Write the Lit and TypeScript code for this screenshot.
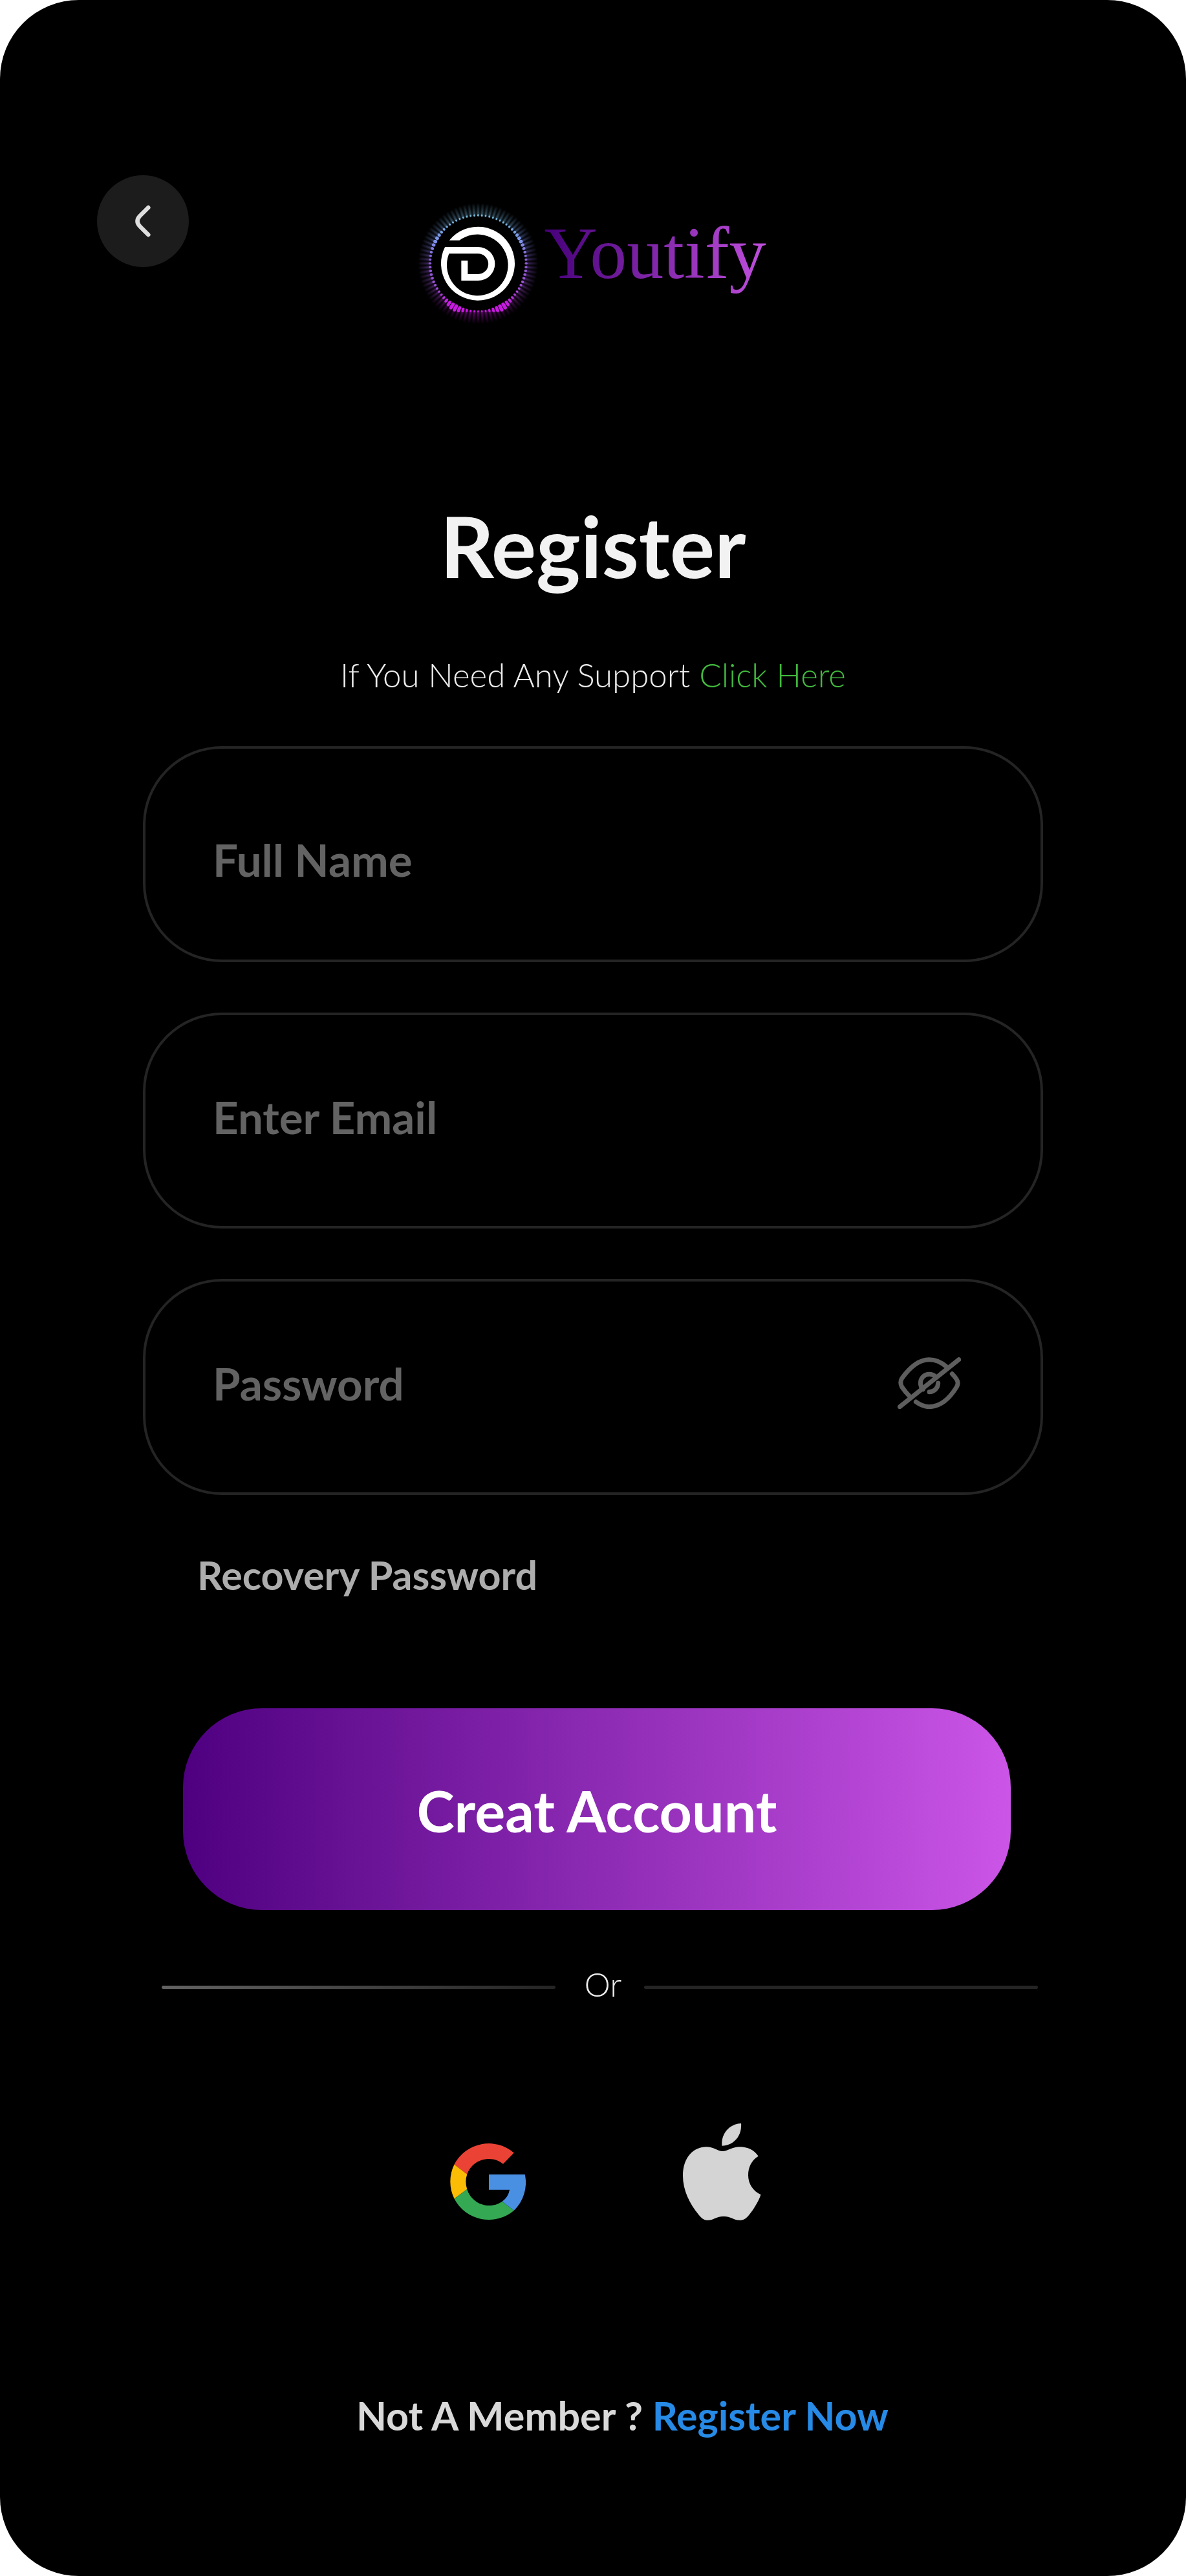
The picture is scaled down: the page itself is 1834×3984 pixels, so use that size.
import { LitElement, html, svg, css } from "lit";
import { customElement, state } from "lit/decorators.js";

type Rgb = [number, number, number];

const DOTS = 80;
const CX = 295;
const CY = 322;

// Colour stops of the halo, from the top (0) to the bottom (1).
const STOPS: [number, Rgb][] = [
  [0, [122, 186, 216]],
  [0.2, [118, 176, 222]],
  [0.34, [124, 148, 236]],
  [0.5, [142, 92, 216]],
  [0.68, [160, 78, 214]],
  [0.8, [196, 30, 222]],
  [1, [208, 16, 232]],
];

function haloColour(t: number): string {
  let i = 1;
  while (i < STOPS.length - 1 && t > STOPS[i][0]) i++;
  const [t0, a] = STOPS[i - 1];
  const [t1, b] = STOPS[i];
  const k = (t - t0) / (t1 - t0);
  return `rgb(${a.map((v, n) => Math.round(v + (b[n] - v) * k)).join(",")})`;
}

const bump = (t: number, centre: number, spread: number) =>
  Math.exp(-(((t - centre) / spread) ** 2));

@customElement("brand-mark")
export class BrandMark extends LitElement {
  static styles = css`
    :host {
      display: block;
    }
    svg {
      display: block;
      width: 200px;
      height: 210px;
    }
  `;

  private spokes() {
    return Array.from({ length: DOTS }, (_, i) => {
      const angle = (i / DOTS) * Math.PI * 2;
      const t = i <= DOTS / 2 ? i / (DOTS / 2) : (DOTS - i) / (DOTS / 2);
      const size = 8 + 8 * bump(t, 0.34, 0.08) + 4 * bump(t, 0.58, 0.12) + 8 * bump(t, 0.84, 0.07);
      const length = 2 + 18 * bump(t, 0.84, 0.07);
      const ray = 46 + 14 * bump(t, 0.84, 0.12);
      return { sx: Math.sin(angle), sy: -Math.cos(angle), size, length, ray, colour: haloColour(t) };
    });
  }

  render() {
    const spokes = this.spokes();
    return html`
      <svg viewBox="0 0 600 630" aria-hidden="true">
        <defs>
          <radialGradient id="fade" gradientUnits="userSpaceOnUse" cx=${CX} cy=${CY} r="284">
            <stop offset="0.79" stop-color="#fff" stop-opacity="0.55"></stop>
            <stop offset="0.88" stop-color="#fff" stop-opacity="0.3"></stop>
            <stop offset="1" stop-color="#fff" stop-opacity="0"></stop>
          </radialGradient>
          <mask id="rays" maskUnits="userSpaceOnUse" x="0" y="0" width="600" height="630">
            <rect width="600" height="630" fill="url(#fade)"></rect>
          </mask>
          <filter id="soft"><feGaussianBlur stdDeviation="3"></feGaussianBlur></filter>
        </defs>
        <g mask="url(#rays)">
          <g filter="url(#soft)" stroke-linecap="round">
            ${spokes.map(
              (s) => svg`<line x1=${CX + s.sx * 226} y1=${CY + s.sy * 226}
                x2=${CX + s.sx * (226 + s.ray)} y2=${CY + s.sy * (226 + s.ray)}
                stroke=${s.colour} stroke-width="10"></line>`,
            )}
          </g>
        </g>
        <g stroke-linecap="round">
          ${spokes.map(
            (s) => svg`<line x1=${CX + s.sx * 222} y1=${CY + s.sy * 222}
              x2=${CX + s.sx * (222 + s.length)} y2=${CY + s.sy * (222 + s.length)}
              stroke=${s.colour} stroke-width=${s.size}></line>`,
          )}
        </g>
        <path
          fill="#fff"
          d="M161.4 215A171 171 0 1 1 141.3 246H295A78 78 0 0 1 295 402H217V309H247V372H295A47.500 47.500 0 0 0 295 277H160A142 142 0 1 0 208 215Z"
        ></path>
      </svg>
    `;
  }
}

@customElement("app-root")
export class AppRoot extends LitElement {
  @state() private showPassword = false;

  static styles = css`
    :host {
      display: block;
      background: #fff;
      font-family: Lato, "Liberation Sans", sans-serif;
    }
    * {
      box-sizing: border-box;
    }
    button,
    input {
      font: inherit;
      color: inherit;
      border: 0;
      background: none;
      padding: 0;
      margin: 0;
    }
    button {
      cursor: pointer;
    }
    a {
      color: inherit;
      text-decoration: none;
    }
    svg {
      display: block;
    }
    .screen {
      min-height: 100vh;
      background: #000;
      border-radius: 122px;
      padding: 271px 150px 212px;
    }
    .header {
      display: grid;
      grid-template-columns: 142px 1fr 142px;
      align-items: start;
    }
    .back {
      width: 142px;
      height: 142px;
      border-radius: 50%;
      background: #1c1c1c;
    }
    .brand {
      display: flex;
      justify-content: center;
      padding-top: 29px;
      padding-right: 8px;
    }
    .wordmark {
      font-family: "Liberation Serif", serif;
      font-size: 114px;
      line-height: 120px;
      padding-top: 32px;
      background: linear-gradient(90deg, #450078, #c04fdd);
      background-clip: text;
      -webkit-background-clip: text;
      color: transparent;
    }
    .content {
      padding: 0 71px;
    }
    .title {
      margin: 270px 0 106px;
      font-size: 130px;
      line-height: 128px;
      font-weight: 700;
      text-align: center;
      color: #f2f2f2;
    }
    .support {
      margin: 0 0 80px;
      font-size: 51px;
      line-height: 60px;
      font-weight: 300;
      text-align: center;
      color: #ececec;
    }
    .support-link {
      color: #42bb3e;
    }
    .fields {
      display: grid;
      gap: 78px;
    }
    .field {
      display: flex;
      align-items: center;
      height: 334px;
      border: 4px solid #242424;
      border-radius: 122px;
      padding: 0 123px 12px 104px;
    }
    .field-low {
      padding-top: 16px;
      padding-bottom: 0;
    }
    .input {
      flex: 1;
      min-width: 0;
      height: 100px;
      font-size: 69px;
      font-weight: 700;
      color: #ccc;
      outline: none;
    }
    .input::placeholder {
      color: #636363;
      opacity: 1;
    }
    .recovery {
      display: inline-block;
      margin: 88px 0 170px 84px;
      font-size: 61px;
      line-height: 72px;
      font-weight: 700;
      color: #adadad;
    }
    .submit-row {
      display: flex;
      padding: 0 50px 0 62px;
    }
    .submit {
      flex: 1;
      height: 312px;
      padding-top: 4px;
      border-radius: 122px;
      background: linear-gradient(90deg, #4e0080, #cb55e7);
      color: #fff;
      font-size: 88px;
      font-weight: 700;
    }
    .divider {
      display: grid;
      grid-template-columns: 1fr 137px 1fr;
      align-items: center;
      margin-top: 85px;
      padding: 0 8px 0 29px;
      font-size: 51px;
      line-height: 60px;
      font-weight: 300;
      color: #ececec;
    }
    .or {
      padding-left: 10px;
      text-align: center;
    }
    .rule {
      height: 5px;
      margin-top: 8px;
      border-radius: 3px;
      background: #242424;
    }
    .rule-fade {
      background: linear-gradient(90deg, #626262, #242424);
    }
    .social {
      display: flex;
      justify-content: center;
      align-items: flex-end;
      gap: 243px;
      margin-top: 185px;
      padding-left: 38px;
    }
    .member {
      margin: 266px 0 0;
      padding-left: 91px;
      font-size: 61px;
      line-height: 72px;
      font-weight: 700;
      text-align: center;
      color: #d9d9d9;
    }
    .member-link {
      color: #268ae6;
    }
  `;

  render() {
    return html`
      <main class="screen">
        <header class="header">
          <button class="back" type="button" aria-label="Back">
            <svg width="142" height="142" viewBox="0 0 142 142" fill="none" stroke="#dedede" stroke-width="6.500" stroke-linecap="round">
              <path d="M79.300 50L66.500 62.800Q58.300 71 66.500 79.200L79.300 92"></path>
            </svg>
          </button>
          <div class="brand">
            <brand-mark></brand-mark>
            <span class="wordmark">Youtify</span>
          </div>
        </header>
        <div class="content">
          <h1 class="title">Register</h1>
          <p class="support">
            If You Need Any Support <a class="support-link" href="#support">Click Here</a>
          </p>
          <form @submit=${(e: Event) => e.preventDefault()}>
            <div class="fields">
              <label class="field field-low">
                <input class="input" type="text" name="name" autocomplete="name" placeholder="Full Name" aria-label="Full Name" />
              </label>
              <label class="field">
                <input class="input" type="email" name="email" autocomplete="email" placeholder="Enter Email" aria-label="Enter Email" />
              </label>
              <div class="field">
                <input
                  class="input"
                  type=${this.showPassword ? "text" : "password"}
                  name="password"
                  autocomplete="new-password"
                  placeholder="Password"
                  aria-label="Password"
                />
                <button
                  type="button"
                  aria-label="Show password"
                  aria-pressed=${this.showPassword ? "true" : "false"}
                  @click=${() => (this.showPassword = !this.showPassword)}
                >
                  <svg width="98" height="80" viewBox="84 90 294 240" fill="none" stroke="#5e5e5e" stroke-width="21" stroke-linecap="round">
                    <path d="M94 320L368 101"></path>
                    <path d="M308 132Q272 101 230 101C175 101 132 149 104 188Q93 208 104 228Q120 252 142 274"></path>
                    <path d="M337 167Q348 178 358 193Q369 210 358 228C325 282 285 320 230 320Q200 320 169 297"></path>
                    <path d="M260 181A41 41 0 0 0 202 239"></path>
                    <path d="M272 210A41 41 0 0 1 231 251"></path>
                  </svg>
                </button>
              </div>
            </div>
            <a class="recovery" href="#recovery">Recovery Password</a>
            <div class="submit-row">
              <button class="submit" type="submit">Creat Account</button>
            </div>
          </form>
          <div class="divider">
            <span class="rule rule-fade"></span>
            <span class="or">Or</span>
            <span class="rule"></span>
          </div>
          <div class="social">
            <button type="button" aria-label="Continue with Google">
              <svg width="117" height="120" viewBox="0 0 117 120">
                <path fill="#ea4335" d="M6.500 33.500A60 60 0 0 1 98.800 15.500L82 32.700A35.500 35.500 0 0 0 26.300 48.700Z"></path>
                <path fill="#fbbc05" d="M6.500 33.500A60 60 0 0 0 6.500 86.500L26.300 71.700A35.500 35.500 0 0 1 26.300 48.700Z"></path>
                <path fill="#34a853" d="M6.500 86.500A60 60 0 0 0 98.800 104.700L80.600 90.700A35.500 35.500 0 0 1 26.300 71.700Z"></path>
                <path fill="#4a90e2" d="M60 49H115.700A60 60 0 0 1 98.800 104.700L80.600 90.700Q90 84 92 72.700H60Z"></path>
              </svg>
            </button>
            <button type="button" aria-label="Continue with Apple">
              <svg width="121" height="150" viewBox="0 0 121 150" fill="#d4d4d4">
                <path d="M90 0C91.500 18 80 34 60.500 34.700C58.500 17 71 1 90 0Z"></path>
                <path d="M61.300 43C69 43 77 36.300 88 36.300C100 36.300 110 41 116.700 50.700C106 57 101 68 101 80C101 93 108 104.500 120.500 110.300C116.500 122 108 135 102 142C98 147 94 149.800 87.800 149.800C79 149.800 74 143.700 63 143.700C52 143.700 47 149.800 38.600 149.800C33 149.800 29 147 25 142C10 124 0 103 0 81C0 52 17 36.300 36.200 36.300C47 36.300 54 43 61.300 43Z"></path>
              </svg>
            </button>
          </div>
          <p class="member">
            Not A Member ? <a class="member-link" href="#register">Register Now</a>
          </p>
        </div>
      </main>
    `;
  }
}
